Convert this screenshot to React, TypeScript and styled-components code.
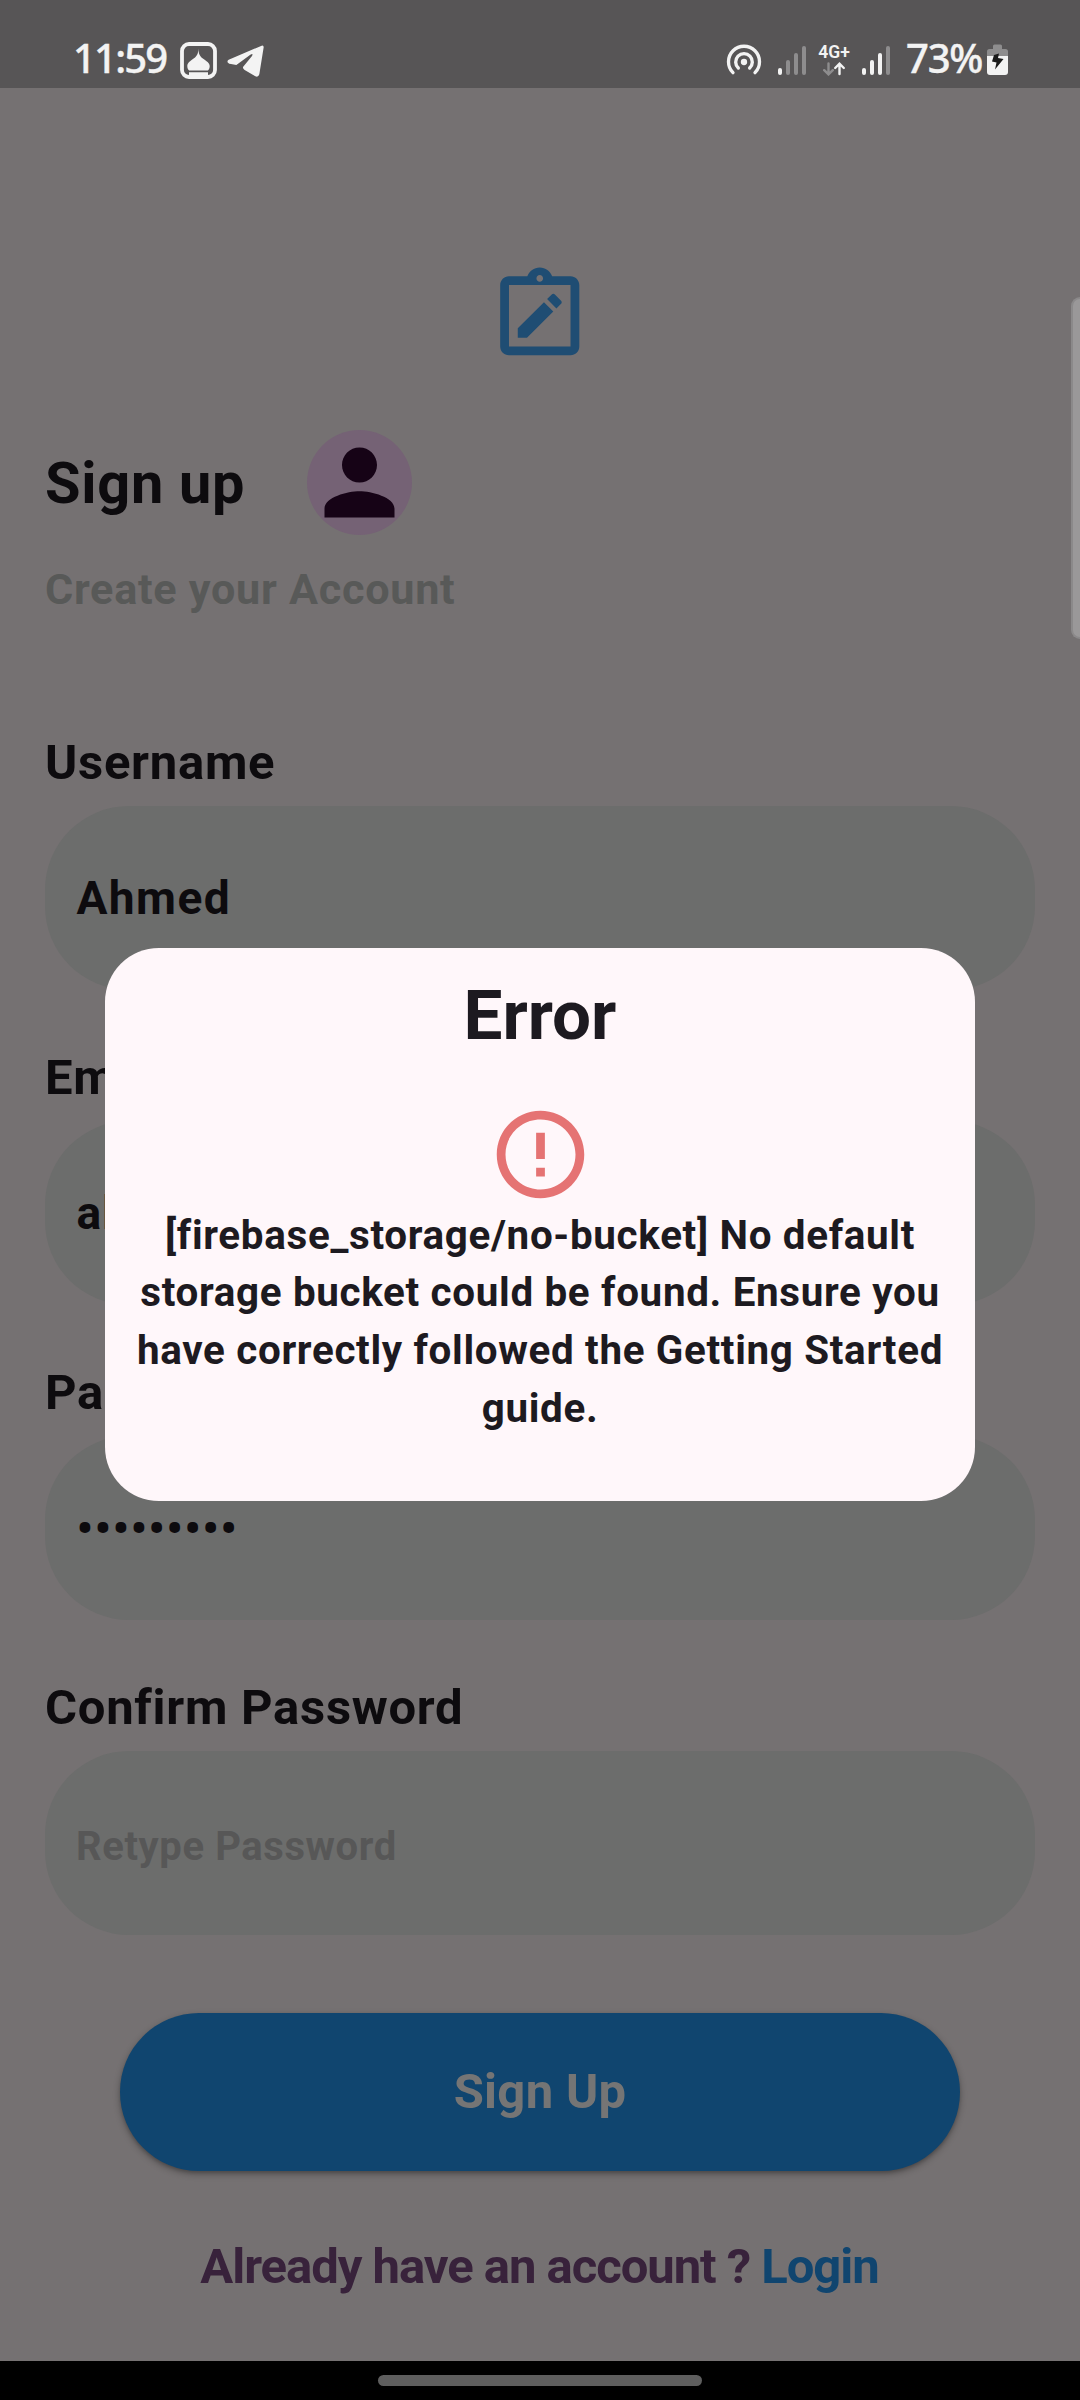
import React from 'react';
import styled, { createGlobalStyle } from 'styled-components';
import { MdErrorOutline, MdOutlineNoteAlt, MdPerson } from 'react-icons/md';

const GlobalStyle = createGlobalStyle`
  * { box-sizing: border-box; }
  body { margin: 0; background: #757172; }
`;

const Screen = styled.div`
  position: relative;
  width: 1080px;
  height: 2400px;
  display: flex;
  flex-direction: column;
  overflow: hidden;
  background: #757172;
  color: #0d0b0e;
  font-family: Roboto, sans-serif;
  font-weight: 700;
  letter-spacing: 0.72px;
`;

/* ---------- status bar ---------- */

const StatusBar = styled.header`
  flex: none;
  height: 88px;
  padding: 31px 72px 0 73px;
  display: flex;
  justify-content: space-between;
  background: #575556;
  color: #f3f3f3;
`;

const StatusGroup = styled.div`
  display: flex;
  align-items: flex-start;
`;

const StatusText = styled.span<{ $width: number; $tight: number }>`
  width: ${p => p.$width}px;
  font: 500 40px/54px 'Noto Sans', sans-serif;
  letter-spacing: ${p => p.$tight}px;
  white-space: nowrap;
  -webkit-text-stroke: 0.4px #f3f3f3;
`;

const StatusIcon = styled.svg<{ $left?: number; $top?: number }>`
  display: block;
  flex: none;
  margin-left: ${p => p.$left ?? 0}px;
  margin-top: ${p => p.$top ?? 0}px;
`;

const Network = styled.div`
  width: 32px;
  margin: 11px 0 0 12px;
  display: flex;
  flex-direction: column;
  align-items: center;
`;

const NetworkLabel = styled.span`
  font: 600 17.5px/20px Roboto, sans-serif;
  letter-spacing: 0;
`;

const Bars = styled.div`
  display: flex;
  align-items: flex-end;
  gap: 4px;
  height: 30px;
  margin-top: 14px;
`;

const Bar = styled.i<{ $height: number; $on: boolean }>`
  width: 4px;
  height: ${p => p.$height}px;
  border-radius: 2px;
  background: ${p => (p.$on ? '#f3f3f3' : '#8e8d8e')};
`;

const FirstSignal = styled.div`
  margin-left: 16px;
`;

const SecondSignal = styled.div`
  margin: 0 16px 0 12px;
`;

/* ---------- page ---------- */

const Page = styled.main`
  flex: 1;
  padding: 174.5px 45px 0;
  display: flex;
  flex-direction: column;
`;

const NoteIcon = styled(MdOutlineNoteAlt)`
  display: block;
  flex: none;
  align-self: center;
  width: 105.5px;
  height: 105.5px;
  color: #1f4d73;
`;

const TitleRow = styled.div`
  display: flex;
  align-items: center;
  gap: 62px;
  margin-top: 62px;
`;

const Title = styled.h1`
  margin: 0;
  padding-top: 1px;
  font-size: 57.7px;
  line-height: 80px;
`;

const Avatar = styled.div`
  width: 105px;
  height: 105px;
  border-radius: 50%;
  background: #756275;
  color: #160316;

  svg {
    display: block;
    width: 105px;
    height: 105px;
  }
`;

const Subtitle = styled.p`
  margin: 24px 0 109px;
  font-size: 43.2px;
  line-height: 62px;
  color: #585958;
`;

const Form = styled.form`
  display: flex;
  flex-direction: column;
  gap: 55px;
`;

const Label = styled.label`
  display: block;
  margin-bottom: 10px;
  font-size: 49px;
  line-height: 66px;
`;

const Field = styled.div<{ $hint?: boolean }>`
  height: 184px;
  padding: ${p => (p.$hint ? '7px 31px 0' : '0 31.5px')};
  display: flex;
  align-items: center;
  border-radius: 84px;
  background: #6c6d6c;
  color: ${p => (p.$hint ? '#575757' : '#0d0b0e')};
  font-size: ${p => (p.$hint ? 40 : 46.1)}px;
  letter-spacing: ${p => (p.$hint ? 0.6 : 1.4)}px;
`;

const SubmitButton = styled.button`
  align-self: center;
  flex: none;
  width: 840px;
  height: 158px;
  margin-top: 78px;
  padding: 0;
  border: 0;
  border-radius: 79px;
  background: #10456f;
  box-shadow: 0 3px 7px rgba(0, 0, 0, 0.3), 0 2px 3px rgba(0, 0, 0, 0.12);
  color: #757575;
  font: 700 49px/66px Roboto, sans-serif;
  letter-spacing: 0.29px;
`;

const LoginPrompt = styled.p`
  margin: 63px 1px 0 0;
  text-align: center;
  font-size: 49px;
  line-height: 66px;
  letter-spacing: -1.04px;
  color: #38223b;
`;

const LoginLink = styled.span`
  color: #10456f;
`;

const NavigationBar = styled.footer`
  flex: none;
  height: 39px;
  padding-top: 14px;
  display: flex;
  justify-content: center;
  background: #000;
`;

const NavigationHandle = styled.div`
  width: 324px;
  height: 11px;
  border-radius: 5.5px;
  background: #5e5e5e;
`;

/* ---------- layers over the page ---------- */

const EdgeHandle = styled.div`
  position: absolute;
  top: 297px;
  right: 0;
  width: 9px;
  height: 342px;
  border: 2px solid #8b898a;
  border-right: 0;
  border-radius: 9px 0 0 9px;
  background: #9a9899;
`;

const DialogLayer = styled.div`
  position: absolute;
  inset: 0;
  padding-top: 948px;
  display: flex;
  justify-content: center;
  align-items: flex-start;
`;

const Dialog = styled.section`
  width: 870px;
  height: 553px;
  padding: 28px 26px 0;
  display: flex;
  flex-direction: column;
  align-items: center;
  border-radius: 54px;
  background: #fff7fa;
  color: #1d1a20;
`;

const DialogTitle = styled.h2`
  margin: 0 0 46px;
  font-size: 69.2px;
  line-height: 80px;
  letter-spacing: 0;
`;

const DialogIcon = styled(MdErrorOutline)`
  display: block;
  flex: none;
  width: 105px;
  height: 105px;
  color: #e57373;
`;

const DialogMessage = styled.p`
  margin: -0.4px 0 0;
  text-align: center;
  font-size: 40.4px;
  line-height: 57.7px;
  letter-spacing: 0.66px;
`;

const SignalBars = ({ strength }: { strength: number }) => (
  <Bars>
    {[7, 15, 22.5, 29.5].map((height, i) => (
      <Bar key={height} $height={height} $on={i < strength} />
    ))}
  </Bars>
);

const fields = [
  { label: 'Username', value: 'Ahmed' },
  { label: 'Email', value: 'ahmed' },
  { label: 'Password', value: '•••••••••' },
  { label: 'Confirm Password', hint: 'Retype Password' },
];

export default function App() {
  return (
    <Screen>
      <GlobalStyle />
      <StatusBar>
        <StatusGroup>
          <StatusText $width={95} $tight={-1.8}>11:59</StatusText>
          <StatusIcon $left={12} $top={11} width="37" height="37" viewBox="0 0 37 37">
            <rect x="2" y="2" width="33" height="33" rx="7" fill="none" stroke="#f3f3f3" strokeWidth="3.8" />
            <path
              d="M18.4 6.500C18.600 12 19.700 14 22.500 16.200C26.500 19 29.700 21 29.700 24.200C29.700 26 29 27.400 27.900 28.500H9.200C8 27.400 7.300 26 7.300 24.200C7.300 21 10 19 14 16.200C17 14 18.200 12 18.400 6.500ZM9 30.200H28V35H9Z"
              fill="#f3f3f3"
            />
          </StatusIcon>
          <StatusIcon $left={10} $top={14} width="37" height="33" viewBox="561 137 111 99">
            <path
              d="M665 139L566 181Q560 185 564 190Q567 194 573 194L589 197L631 166Q641 161 636 170L609 203Q608 208 614 212L646 231Q655 235 658 225L671 144Q671 137 665 139Z"
              fill="#f3f3f3"
            />
          </StatusIcon>
        </StatusGroup>
        <StatusGroup>
          <StatusIcon $top={13} width="36" height="32" viewBox="78 132 108 96">
            <g fill="none" stroke="#f3f3f3" strokeWidth="10" strokeLinecap="round">
              <path d="M99 218A46.500 46.500 0 1 1 165 218" />
              <path d="M115 204A25 25 0 1 1 149 204" />
            </g>
            <circle cx="132" cy="186" r="9.500" fill="#f3f3f3" />
          </StatusIcon>
          <FirstSignal>
            <SignalBars strength={1} />
          </FirstSignal>
          <Network>
            <NetworkLabel>4G+</NetworkLabel>
            <StatusIcon width="24" height="14" viewBox="0 0 24 14" fill="none" strokeWidth="2.400" strokeLinecap="round">
              <path d="M6.500 1.500V12M2.200 8.200L6.500 12.400L10.800 8.200" stroke="#8e8d8e" />
              <path d="M17.500 12V2M13.200 6L17.500 1.700L21.800 6" stroke="#f3f3f3" />
            </StatusIcon>
          </Network>
          <SecondSignal>
            <SignalBars strength={3} />
          </SecondSignal>
          <StatusText $width={77} $tight={-1.2}>73%</StatusText>
          <StatusIcon $left={4} $top={13} width="21" height="31" viewBox="0 0 21 31">
            <path d="M6 2Q6 .5 7.500 .5H13.500Q15 .5 15 2V5H18.500Q21 5 21 7.500V12H0V7.500Q0 5 2.500 5H6Z" fill="#8e8d8e" />
            <path d="M0 12H21V28Q21 31 18 31H3Q0 31 0 28Z" fill="#f3f3f3" />
            <path d="M7 11L12 9.500L11 14L16.500 15L8 25.500L9.500 18.500L5 17.500Z" fill="#1b1b1b" />
          </StatusIcon>
        </StatusGroup>
      </StatusBar>

      <Page>
        <NoteIcon />
        <TitleRow>
          <Title>Sign up</Title>
          <Avatar>
            <MdPerson />
          </Avatar>
        </TitleRow>
        <Subtitle>Create your Account</Subtitle>
        <Form>
          {fields.map(field => (
            <div key={field.label}>
              <Label>{field.label}</Label>
              <Field $hint={!field.value}>{field.value ?? field.hint}</Field>
            </div>
          ))}
        </Form>
        <SubmitButton type="button">Sign Up</SubmitButton>
        <LoginPrompt>
          Already have an account ? <LoginLink>Login</LoginLink>
        </LoginPrompt>
      </Page>

      <NavigationBar>
        <NavigationHandle />
      </NavigationBar>

      <EdgeHandle />
      <DialogLayer>
        <Dialog role="alertdialog">
          <DialogTitle>Error</DialogTitle>
          <DialogIcon />
          <DialogMessage>
            [firebase_storage/no-bucket] No default storage bucket could be found. Ensure you have correctly followed
            the Getting Started guide.
          </DialogMessage>
        </Dialog>
      </DialogLayer>
    </Screen>
  );
}
